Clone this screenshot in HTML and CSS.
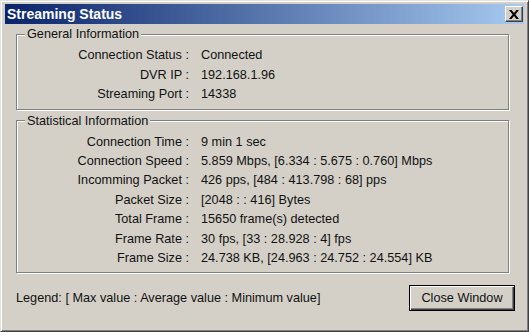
FILE: index.html
```html
<!DOCTYPE html>
<html lang="en">
<head>
  <meta charset="UTF-8" />
  <title>Streaming Status</title>
  <link rel="stylesheet" href="styles.css">
</head>

<body>
  <div class="window">
    <div class="titlebar">
      <span class="title">Streaming Status</span>
      <button class="close" aria-label="Close">
        <svg width="10" height="9" viewBox="0 0 10 9">
          <path d="M0 0h2.6L5 3 7.4 0H10L6.4 4.5 10 9H7.4L5 6 2.6 9H0l3.6-4.5z" fill="#000"/>
        </svg>
      </button>
    </div>

    <fieldset class="group general">
      <legend>General Information</legend>
      <div class="info">
        <span class="label">Connection Status :</span><span>Connected</span>
        <span class="label">DVR IP :</span><span>192.168.1.96</span>
        <span class="label">Streaming Port :</span><span>14338</span>
      </div>
    </fieldset>

    <fieldset class="group stats">
      <legend>Statistical Information</legend>
      <div class="info">
        <span class="label">Connection Time :</span><span>9 min 1 sec</span>
        <span class="label">Connection Speed :</span><span>5.859 Mbps, [6.334 : 5.675 : 0.760] Mbps</span>
        <span class="label">Incomming Packet :</span><span>426 pps, [484 : 413.798 : 68] pps</span>
        <span class="label">Packet Size :</span><span>[2048 : : 416] Bytes</span>
        <span class="label">Total Frame :</span><span>15650 frame(s) detected</span>
        <span class="label">Frame Rate :</span><span>30 fps, [33 : 28.928 : 4] fps</span>
        <span class="label">Frame Size :</span><span>24.738 KB, [24.963 : 24.752 : 24.554] KB</span>
      </div>
    </fieldset>

    <div class="footer">
      <span>Legend: [ Max value : Average value : Minimum value]</span>
      <button class="btn">Close Window</button>
    </div>
  </div>
</body>
</html>
```

FILE: styles.css
```css
body {
  margin: 0;
  font-family: "Liberation Sans", Arial, sans-serif;
  font-size: 12.7px;
  color: #111;
}

.window {
  width: 529px;
  height: 332px;
  box-sizing: border-box;
  background: #d4d0c8;
  border: 1px solid;
  border-color: #e4e2dc #404040 #404040 #e4e2dc;
  box-shadow: inset 1px 1px 0 #fff, inset -1px -1px 0 #808080;
  padding: 3px 4px 4px 4px;
}

.titlebar {
  display: flex;
  align-items: center;
  justify-content: space-between;
  height: 20px;
  padding: 0 1px 0 2px;
  background: linear-gradient(to right, #0a246a, #a6caf0);
}

.title {
  color: #fff;
  font-weight: bold;
  font-size: 14px;
}

.close {
  display: flex;
  align-items: center;
  justify-content: center;
  width: 18px;
  height: 16px;
  padding: 0;
  background: #d4d0c8;
  border: 1px solid;
  border-color: #fff #404040 #404040 #fff;
  box-shadow: inset -1px -1px 0 #808080;
}

.group {
  margin: 3px 15px 0 11px;
  padding: 5px 0 4px 0;
  border: 1px solid #808080;
  box-shadow: inset 1px 1px 0 #fff, 1px 1px 0 #fff;
}

.stats {
  margin-top: 4px;
}

.group legend {
  margin-left: 8px;
  padding: 0 2px;
  line-height: 14px;
  background: #d4d0c8;
}

.info {
  display: grid;
  grid-template-columns: 172px auto;
  column-gap: 12px;
  line-height: 19.5px;
}

.stats .info {
  line-height: 19.4px;
}

.info .label {
  text-align: right;
}

.footer {
  display: flex;
  align-items: center;
  justify-content: space-between;
  margin-top: 12px;
  padding: 0 9px 0 11px;
}

.btn {
  width: 106px;
  height: 26px;
  padding: 0;
  font: inherit;
  color: #111;
  background: #d4d0c8;
  border: 1px solid #000;
  box-shadow: inset 1px 1px 0 #fff, inset -1px -1px 0 #404040, inset -2px -2px 0 #808080;
}
```
